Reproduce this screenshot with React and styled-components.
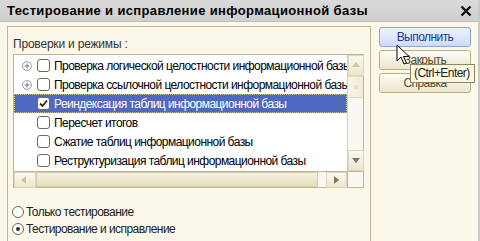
import React from 'react'
import styled, { createGlobalStyle } from 'styled-components'

const GlobalStyle = createGlobalStyle`
  html, body {
    margin: 0;
    padding: 0;
    background: #fbf8ea;
  }
  body {
    font-family: "Liberation Sans", Arial, sans-serif;
    font-size: 12px;
    letter-spacing: -0.55px;
    color: #000;
  }
`

const Window = styled.div`
  position: relative;
  width: 480px;
  height: 241px;
  overflow: hidden;
  background: #fbf8ea;
  box-sizing: border-box;
  border-right: 2px solid #c9c9c9;
  display: flex;
  flex-direction: column;
`

const TitleBar = styled.div`
  height: 22px;
  flex: none;
  display: flex;
  align-items: center;
  justify-content: space-between;
  padding: 0 6px 0 7px;
  background: linear-gradient(#dadada, #cfcfcf);
  border-bottom: 1px solid #bdbdbd;
  box-sizing: border-box;
  font-weight: bold;
  font-size: 13px;
  letter-spacing: 0.35px;
`

const Body = styled.div`
  flex: 1;
  display: flex;
  padding: 4px 0 0 7px;
  gap: 8px;
  min-height: 0;
`

const Frame = styled.div`
  width: 364px;
  box-sizing: border-box;
  border: 1px solid #bfb892;
  border-bottom: none;
  padding: 5px 6px 0 5px;
  display: flex;
  flex-direction: column;
`

const FrameLabel = styled.div`
  height: 22px;
  line-height: 24px;
  color: #333;
  letter-spacing: -0.2px;
`

const ListBox = styled.div`
  height: 134px;
  box-sizing: border-box;
  border: 1px solid #bfb892;
  background: #fff;
  display: grid;
  grid-template-columns: 1fr 16px;
  grid-template-rows: 1fr 16px;
`

const Rows = styled.div`
  overflow: hidden;
  padding-top: 1px;
`

const Row = styled.div`
  height: 19px;
  display: flex;
  align-items: center;
  white-space: nowrap;
  box-sizing: border-box;
  background: ${p => (p.$selected ? '#4f68c2' : 'transparent')};
  color: ${p => (p.$selected ? '#fff' : '#000')};
  outline: ${p => (p.$selected ? '1px dotted #c9c2a0' : 'none')};
  outline-offset: -1px;
`

const Expander = styled.span`
  width: 23px;
  flex: none;
  display: flex;
  justify-content: flex-end;
  padding-right: 5px;
  box-sizing: border-box;
`

const Check = styled.span`
  width: 13px;
  height: 13px;
  flex: none;
  box-sizing: border-box;
  border: 1px solid #6e6a58;
  border-radius: 3px;
  background: #fff;
  margin-right: 4px;
  display: flex;
  align-items: center;
  justify-content: center;
`

const VScroll = styled.div`
  border-left: 1px solid #d9d3b4;
  background: #faf8f0;
  display: flex;
  flex-direction: column;
  justify-content: space-between;
`

const HScroll = styled.div`
  border-top: 1px solid #bfb892;
  display: flex;
  background: #faf8f0;
`

const ScrollBtn = styled.div`
  width: ${p => p.$w || 16}px;
  height: ${p => p.$h || 16}px;
  flex: none;
  box-sizing: border-box;
  background: linear-gradient(#fbf9ef, #ebe6cc);
  border: 1px solid #dcd6b8;
  display: flex;
  align-items: center;
  justify-content: center;
  color: ${p => (p.$dim ? '#c8c4b2' : '#77756d')};
`

const Thumb = styled.div`
  flex: 1;
  background: linear-gradient(#f5f1de, #e4ddbc);
  border: 1px solid #d2cba8;
  margin-right: 8px;
`

const VThumb = styled.div`
  height: 22px;
  box-sizing: border-box;
  background: linear-gradient(90deg, #f8f5e8, #efeadb);
  border-top: 1px solid #e1dcc4;
  border-bottom: 1px solid #e1dcc4;
  display: flex;
  align-items: center;
  justify-content: center;
`

const VTop = styled.div`
  display: flex;
  flex-direction: column;
`

const Corner = styled.div`
  background: #faf8f0;
  border-top: 1px solid #bfb892;
  border-left: 1px solid #bfb892;
`

const Radios = styled.div`
  padding-top: 16px;
  display: flex;
  flex-direction: column;
  gap: 1px;
`

const RadioRow = styled.div`
  height: 16px;
  display: flex;
  align-items: center;
  color: #222;
  margin-left: -1px;
`

const RadioDot = styled.span`
  width: 12px;
  height: 12px;
  border-radius: 50%;
  border: 1px solid #6e6a58;
  background: #fff;
  box-sizing: border-box;
  margin-right: 2px;
  display: flex;
  align-items: center;
  justify-content: center;
  &::after {
    content: '';
    width: 4px;
    height: 4px;
    border-radius: 50%;
    background: ${p => (p.$on ? '#333' : 'transparent')};
  }
`

const Buttons = styled.div`
  width: 92px;
  display: flex;
  flex-direction: column;
  gap: 3px;
  padding-top: 1px;
`

const Button = styled.div`
  height: 20px;
  box-sizing: border-box;
  border-radius: 3px;
  border: 1px solid ${p => (p.$hover ? '#8ea6d6' : '#b8b08a')};
  background: ${p =>
    p.$hover ? 'linear-gradient(#eef3fd, #cddcf7)' : 'linear-gradient(#fffdf6, #ebe5cb)'};
  display: flex;
  align-items: center;
  justify-content: center;
  color: ${p => (p.$hover ? '#1e3a8c' : '#5a4a2a')};
`

const Tooltip = styled.div`
  position: absolute;
  left: 410px;
  top: 64px;
  height: 19px;
  padding: 0 4px 0 3px;
  box-sizing: border-box;
  border: 1px solid #8c8665;
  background: #fbf8e1;
  line-height: 17px;
  color: #222;
`

const Cursor = styled.svg`
  position: absolute;
  left: 396px;
  top: 44px;
`

const Plus = () => (
  <svg width="10" height="10" viewBox="0 0 10 10">
    <circle cx="5" cy="5" r="4.4" fill="#fff" stroke="#9a9a9a" strokeWidth="1" />
    <path d="M2.5 5h5M5 2.5v5" stroke="#777" strokeWidth="1" />
  </svg>
)

const Tick = () => (
  <svg width="11" height="11" viewBox="0 0 11 11">
    <path d="M2 5.5l2.5 2.5L9 2.5" fill="none" stroke="#222" strokeWidth="1.8" />
  </svg>
)

const Arrow = ({ dir }) => {
  const d = {
    up: 'M1 6h8L5 1z',
    down: 'M1 2h8L5 7z',
    left: 'M6 1v8L1 5z',
    right: 'M2 1v8l5-4z',
  }[dir]
  return (
    <svg width="10" height="10" viewBox="0 0 10 10">
      <path d={d} fill="currentColor" />
    </svg>
  )
}

const items = [
  { text: 'Проверка логической целостности информационной базы', plus: true },
  { text: 'Проверка ссылочной целостности информационной базы', plus: true },
  { text: 'Реиндексация таблиц информационной базы', checked: true, selected: true },
  { text: 'Пересчет итогов' },
  { text: 'Сжатие таблиц информационной базы' },
  { text: 'Реструктуризация таблиц информационной базы' },
]

export default function App() {
  return (
    <Window>
      <GlobalStyle />
      <TitleBar>
        <span>Тестирование и исправление информационной базы</span>
        <svg width="12" height="12" viewBox="0 0 12 12">
          <path d="M1.5 1.5l9 9M10.5 1.5l-9 9" stroke="#111" strokeWidth="2.4" />
        </svg>
      </TitleBar>
      <Body>
        <Frame>
          <FrameLabel>Проверки и режимы :</FrameLabel>
          <ListBox>
            <Rows>
              {items.map(it => (
                <Row key={it.text} $selected={it.selected}>
                  <Expander>{it.plus && <Plus />}</Expander>
                  <Check>{it.checked && <Tick />}</Check>
                  <span>{it.text}</span>
                </Row>
              ))}
            </Rows>
            <VScroll>
              <VTop>
                <ScrollBtn $h={21} $dim>
                  <Arrow dir="up" />
                </ScrollBtn>
                <VThumb>
                  <svg width="6" height="6" viewBox="0 0 6 6">
                    <circle cx="3" cy="3" r="2.2" fill="#e4e0cc" />
                  </svg>
                </VThumb>
              </VTop>
              <ScrollBtn $h={21}>
                <Arrow dir="down" />
              </ScrollBtn>
            </VScroll>
            <HScroll>
              <ScrollBtn $w={22} $dim>
                <Arrow dir="left" />
              </ScrollBtn>
              <Thumb />
              <ScrollBtn $w={21}>
                <Arrow dir="right" />
              </ScrollBtn>
            </HScroll>
            <Corner />
          </ListBox>
          <Radios>
            <RadioRow>
              <RadioDot />
              Только тестирование
            </RadioRow>
            <RadioRow>
              <RadioDot $on />
              Тестирование и исправление
            </RadioRow>
          </Radios>
        </Frame>
        <Buttons>
          <Button $hover>Выполнить</Button>
          <Button>Закрыть</Button>
          <Button>Справка</Button>
        </Buttons>
      </Body>
      <Tooltip>(Ctrl+Enter)</Tooltip>
      <Cursor width="14" height="22" viewBox="0 0 14 22">
        <path d="M1 1v16l4-4 3 7 2.5-1-3-6.5H13z" fill="#fff" stroke="#000" strokeWidth="1" strokeLinejoin="round" />
      </Cursor>
    </Window>
  )
}
